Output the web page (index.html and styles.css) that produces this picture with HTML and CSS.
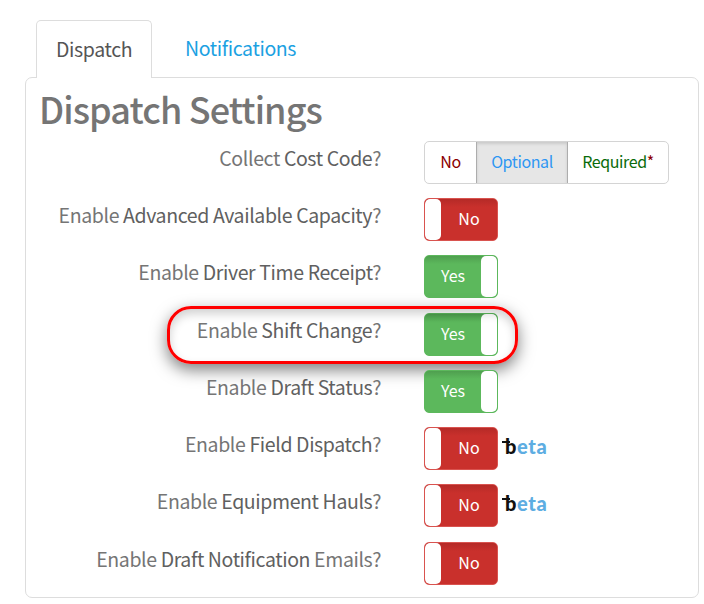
FILE: index.html
```html
<!DOCTYPE html>
<html lang="en">
<head>
<meta charset="utf-8">
<title>Dispatch Settings</title>
<link rel="stylesheet" href="styles.css">
</head>
<body>
<main class="page">
  <nav class="tabs">
    <a class="tab tab-active">Dispatch</a>
    <a class="tab tab-link">Notifications</a>
  </nav>
  <section class="panel">
    <h1 class="title">Dispatch Settings</h1>
    <div class="rows">
      <div class="row">
        <div class="label">Collect <b>Cost Code</b>?</div>
        <div class="control">
          <div class="segmented">
            <span class="seg seg-no">No</span>
            <span class="seg seg-optional">Optional</span>
            <span class="seg seg-required">Required<i>*</i></span>
          </div>
        </div>
      </div>
      <div class="row">
        <div class="label">Enable <b>Advanced Available Capacity</b>?</div>
        <div class="control"><div class="toggle toggle-no"><span class="knob"></span><span class="state">No</span></div></div>
      </div>
      <div class="row">
        <div class="label">Enable <b>Driver Time Receipt</b>?</div>
        <div class="control"><div class="toggle toggle-yes"><span class="state">Yes</span><span class="knob"></span></div></div>
      </div>
      <div class="row">
        <div class="highlight"></div>
        <div class="label">Enable <b>Shift Change</b>?</div>
        <div class="control"><div class="toggle toggle-yes"><span class="state">Yes</span><span class="knob"></span></div></div>
      </div>
      <div class="row">
        <div class="label">Enable <b>Draft Status</b>?</div>
        <div class="control"><div class="toggle toggle-yes"><span class="state">Yes</span><span class="knob"></span></div></div>
      </div>
      <div class="row">
        <div class="label">Enable <b>Field Dispatch</b>?</div>
        <div class="control"><div class="toggle toggle-no"><span class="knob"></span><span class="state">No</span></div><span class="beta"><span class="beta-b">b</span>eta</span></div>
      </div>
      <div class="row">
        <div class="label">Enable <b>Equipment Hauls</b>?</div>
        <div class="control"><div class="toggle toggle-no"><span class="knob"></span><span class="state">No</span></div><span class="beta"><span class="beta-b">b</span>eta</span></div>
      </div>
      <div class="row">
        <div class="label">Enable <b>Draft Notification</b> Emails?</div>
        <div class="control"><div class="toggle toggle-no"><span class="knob"></span><span class="state">No</span></div></div>
      </div>
    </div>
  </section>
</main>
</body>
</html>
```
FILE: styles.css
```css
* { box-sizing: border-box; }
html, body { margin: 0; background: #fff; }
body {
  font-family: "Noto Sans CJK SC", "Noto Sans", sans-serif;
  color: #757575;
  width: 704px;
  height: 604px;
  overflow: hidden;
}
.page { padding: 20px 5px 0 25px; }
.tabs { display: flex; padding-left: 11px; height: 57px; position: relative; z-index: 1; }
.tab { font-size: 19.5px; letter-spacing: -.37px; line-height: 55px; height: 58px; padding: 0 19px; }
.tab-active {
  width: 116px;
  color: #555;
  background: #fff;
  border: 1px solid #ddd;
  border-bottom: 0;
  border-radius: 5px 5px 0 0;
}
.tab-link { color: #1ba1e2; padding-left: 33px; }
.panel {
  width: 674px;
  height: 521px;
  border: 1px solid #ddd;
  border-radius: 7px;
  padding: 0 13px;
}
.title {
  margin: 0;
  font-size: 36px;
  font-weight: 500;
  line-height: 60px;
  color: #757575;
  letter-spacing: -.9px;
}
.rows { display: flex; flex-direction: column; gap: 14.25px; margin-top: 2.85px; }
.row {
  position: relative;
  display: grid;
  grid-template-columns: 342px 1fr;
  column-gap: 43px;
  height: 43px;
}
.label {
  font-size: 19.5px;
  letter-spacing: -.38px;
  line-height: 33px;
  text-align: right;
  white-space: nowrap;
}
.label b { font-weight: 400; color: #606060; }
.control { display: flex; align-items: center; gap: 5px; }
.segmented {
  display: flex;
  height: 43px;
  width: 245px;
  border: 1px solid #d4d4d4;
  border-radius: 5px;
  font-size: 16px;
  letter-spacing: -.4px;
  line-height: 39px;
  text-align: center;
  overflow: hidden;
}
.seg-no { width: 51px; color: #8b0000; }
.seg-optional {
  width: 92px;
  color: #2e96f3;
  background: #e6e6e6;
  border-left: 1px solid #adadad;
  border-right: 1px solid #adadad;
  box-shadow: inset 0 2px 3px rgba(0,0,0,.12);
}
.seg-required { flex: 1; color: #0a6b0a; }
.seg-required i { font-style: normal; color: #8b0000; }
.toggle {
  display: flex;
  width: 74px;
  height: 43px;
  border-radius: 5px;
  overflow: hidden;
  border: 1px solid;
  font-size: 16px;
  color: #fff;
}
.toggle-no { background: linear-gradient(#b52a27, #c9302c 8px); border-color: #d9534f; }
.toggle-yes { background: linear-gradient(#4f9f4f, #5cb85c 8px); border-color: #5cb85c; }
.knob {
  width: 16px;
  background: #fff;
  border-radius: 5px;
  flex: none;
}
.state { flex: 1; text-align: center; line-height: 38px; }
.highlight {
  position: absolute;
  left: 128px;
  top: -7px;
  width: 351px;
  height: 58px;
  border: 3px solid #f00;
  border-radius: 24px;
  box-shadow: 0 6px 16px rgba(0,0,0,.5), inset 0 5px 10px rgba(0,0,0,.18);
  pointer-events: none;
}
.beta {
  font-family: "Lato", sans-serif;
  font-weight: 900;
  font-size: 20px;
  letter-spacing: .6px;
  color: #5dade2;
  margin: -5px 0 0 2px;
}
.beta-b { position: relative; color: #111; }
.beta-b::before {
  content: "";
  position: absolute;
  left: -3px;
  top: 7px;
  width: 8px;
  height: 2px;
  background: #111;
}
```
